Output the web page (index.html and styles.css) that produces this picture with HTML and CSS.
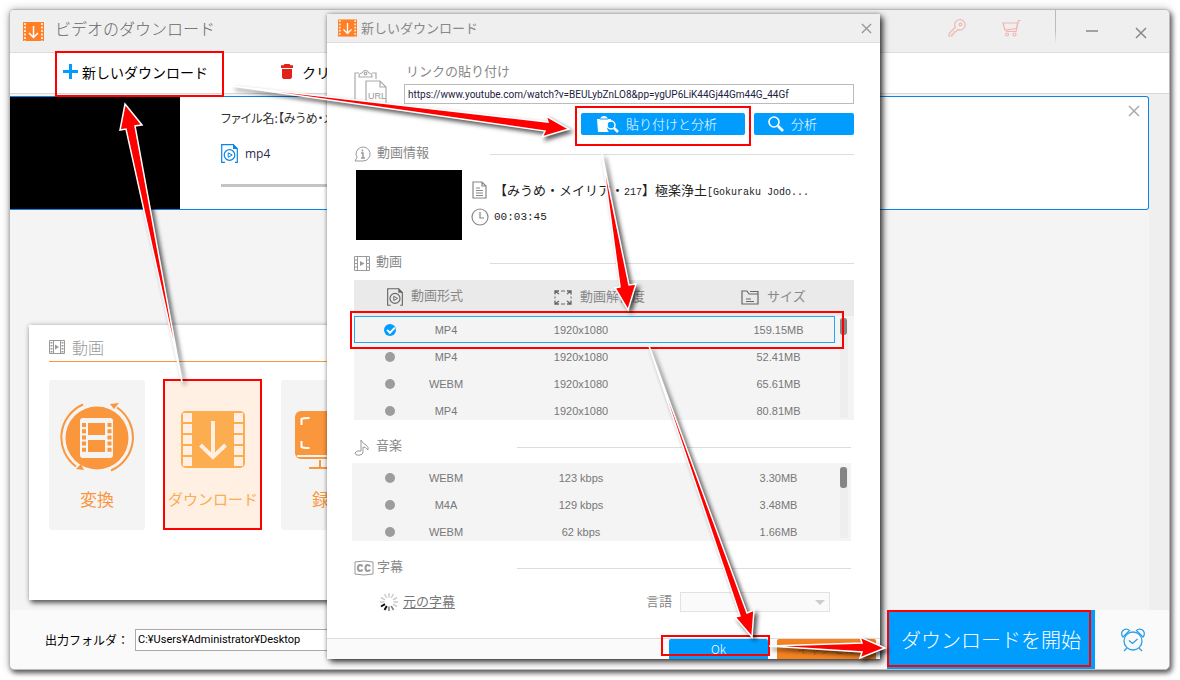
FILE: index.html
```html
<!DOCTYPE html>
<html lang="ja">
<head>
<meta charset="utf-8">
<title>ビデオのダウンロード</title>
<link rel="stylesheet" href="styles.css">
</head>
<body>
<svg class="defs" width="0" height="0" aria-hidden="true">
  <symbol id="logo" viewBox="0 0 21 19">
    <path fill="#ff7f27" d="M0 0h21v19H0z"/>
    <path stroke="#fbe3d0" stroke-width="2" stroke-dasharray="2 1.5" d="M2 1v18M19 1v18"/>
    <path fill="none" stroke="#fff" stroke-width="1.5" d="M10.500 4v11M6 11l4.500 4.500L15 11"/>
  </symbol>
  <symbol id="cross" viewBox="0 0 12 12"><path d="M1 1l10 10M11 1L1 11" fill="none" stroke="currentColor" stroke-width="1.500"/></symbol>
  <symbol id="film" viewBox="0 0 16 14">
    <path fill="none" stroke="currentColor" d="M.5.5h15v13H.5zM4.500.5v13M11.500.5v13"/>
    <path stroke="currentColor" stroke-width="2" stroke-dasharray="1.500 1.500" d="M2.500 2v11M13.500 2v11"/>
    <path fill="currentColor" d="M6 4.500l4 2.500-4 2.500z"/>
  </symbol>
  <symbol id="film-light" viewBox="0 0 16 15">
    <path fill="none" stroke="currentColor" d="M.5.5h15v14H.5zM3.500.5v14M12.500.5v14M.5 4h3M.5 7.500h3M.5 11h3M12.500 4h3M12.500 7.500h3M12.500 11h3"/>
    <path fill="currentColor" d="M6 5l4.500 2.500L6 10z"/>
  </symbol>
  <symbol id="media" viewBox="0 0 17 19">
    <path fill="none" stroke="currentColor" stroke-width="1.200" d="M4 18.300H.7V.7h11.600l4 4v13.600H14"/>
    <path fill="currentColor" d="M12 0l5 5h-5z"/>
    <circle cx="8.500" cy="11" r="5.300" fill="none" stroke="currentColor" stroke-width="1.200"/>
    <path fill="none" stroke="currentColor" d="M7.200 8.800l4 2.200-4 2.200z"/>
  </symbol>
  <symbol id="lens" viewBox="0 0 16 16">
    <circle cx="6" cy="6" r="5" fill="none" stroke="#fff" stroke-width="1.600"/>
    <path d="M10 10l5 5" stroke="#fff" stroke-width="2.600"/>
  </symbol>
</svg>

<main class="window">
  <header class="titlebar">
    <svg class="logo"><use href="#logo"/></svg>
    <h1>ビデオのダウンロード</h1>
    <nav class="title-tools">
      <button class="icon-button pink" aria-label="登録">
        <svg width="18" height="18" viewBox="0 0 18 18" fill="none" stroke="currentColor" stroke-width="1.200"><path d="M7.300 8.300L1 14.500V17h3v-2h2v-2.200h1.700l2-2.200a5.200 5.200 0 1 0-2.400-2.300z"/><circle cx="12.500" cy="5.400" r="1.300"/></svg>
      </button>
      <button class="icon-button pink cart" aria-label="購入">
        <svg width="19" height="18" viewBox="0 0 19 18" fill="none" stroke="currentColor" stroke-width="1.200"><path d="M18.500 1.500h-2L14 12.500H4M1 4h14.500L14.500 9.500 3 11 1 4z"/><circle cx="5" cy="15.500" r="1.500"/><circle cx="12.500" cy="15.500" r="1.500"/></svg>
      </button>
      <span class="divider"></span>
      <button class="icon-button minimize" aria-label="最小化"><svg width="12" height="2"><path d="M0 1h12" stroke="currentColor" stroke-width="1.500"/></svg></button>
      <button class="icon-button close" aria-label="閉じる"><svg width="12" height="12"><use href="#cross"/></svg></button>
    </nav>
  </header>

  <div class="toolbar">
    <button class="tool tool-new"><svg width="15" height="15" viewBox="0 0 15 15"><path d="M7.500 0v15M0 7.500h15" stroke="#009dff" stroke-width="3"/></svg>新しいダウンロード</button>
    <button class="tool"><svg width="12" height="15" viewBox="0 0 12 15" fill="#e2231a"><path d="M3.500 0h5l1 1.200H12V4H0V1.200h2.500zM1 5h10v8.500l-1.500 1.500h-7L1 13.500z"/></svg><span>クリア</span></button>
  </div>

  <div class="content">
    <article class="task">
      <div class="task-thumb"></div>
      <div class="task-info">
        <p class="task-name">ファイル名:【みうめ・メイリア】</p>
        <p class="task-format"><svg width="17" height="19"><use href="#media"/></svg>mp4</p>
        <div class="task-progress"></div>
      </div>
      <button class="icon-button task-close" aria-label="削除"><svg width="12" height="12"><use href="#cross"/></svg></button>
    </article>
    <section class="panel">
      <h2><svg width="16" height="14"><use href="#film"/></svg>動画</h2>
      <div class="cards">
        <button class="card">
          <svg width="74" height="70" viewBox="0 0 74 70">
            <circle cx="37" cy="35" r="31.500" fill="#fa963c"/>
            <path d="M23 1.500a36 36 0 0 0-7 62M51 67.500a36 36 0 0 0 6-63" fill="none" stroke="#fa963c" stroke-width="2"/>
            <path fill="#fa963c" d="M50 1l9-1-5 6zM16 66l8 1-3-6z"/>
            <rect x="20" y="15" width="33" height="40" rx="3" fill="#f4f4f4"/>
            <path fill="#fa963c" d="M28 20h17v12H28zM28 37h17v12H28z"/>
            <path stroke="#fa963c" stroke-width="4" stroke-dasharray="4 2.200" d="M24 20v31M49.500 20v31"/>
          </svg>
          <span class="large">変換</span>
        </button>
        <button class="card active">
          <svg width="74" height="70" viewBox="0 0 74 70">
            <rect x="5" y="8" width="64" height="57" rx="5" fill="#fbad4f"/>
            <path stroke="#fff0e3" stroke-width="9" stroke-dasharray="9 2" d="M11.500 10v53M62.500 10v53"/>
            <path d="M37 18v35M24.500 42L37 54l12.500-12" fill="none" stroke="#fff0e3" stroke-width="4"/>
          </svg>
          <span>ダウンロード</span>
        </button>
        <button class="card">
          <svg width="74" height="70" viewBox="0 0 74 70">
            <rect x="3" y="8" width="68" height="48" rx="6" fill="#fa963c"/>
            <path d="M5 53h64" stroke="#f4f4f4" stroke-width="2"/>
            <path d="M9.500 22v-6q1-1 8-1M9.500 38v6q1 1 8 1" fill="none" stroke="#fff" stroke-width="2"/>
            <path d="M28 57v8M46 57v8M17 65h40" stroke="#fa963c" stroke-width="2"/>
          </svg>
          <span class="large">録画</span>
        </button>
      </div>
    </section>
  </div>

  <footer class="bottom">
    <label for="folder">出力フォルダ：</label>
    <input id="folder" class="folder" value="C:¥Users¥Administrator¥Desktop">
    <button class="start">ダウンロードを開始</button>
    <button class="icon-button alarm" aria-label="アラーム">
      <svg width="26" height="24" viewBox="0 0 26 24" fill="none" stroke="currentColor" stroke-width="1.300"><circle cx="13" cy="13" r="9"/><path d="M3 9a4.500 4.500 0 1 1 6.500-6.500zM23 9a4.500 4.500 0 1 0-6.500-6.500zM9 12.500l3.500 3 5-4.500M7 20l-3 3M19 20l3 3"/></svg>
    </button>
  </footer>
</main>

<section class="dialog" role="dialog" aria-label="新しいダウンロード">
  <header class="dialog-title">
    <svg class="logo"><use href="#logo"/></svg>
    <h2>新しいダウンロード</h2>
    <button class="icon-button" aria-label="閉じる"><svg width="11" height="11"><use href="#cross"/></svg></button>
  </header>

  <div class="dialog-body">
    <div class="link">
      <svg class="url-icon" width="34" height="36" viewBox="0 0 34 36" fill="none" stroke="#aaa" stroke-width="1.200">
        <path d="M11 34H1V4h4M18 4h4v6"/><path d="M5 8q0-4 3-4 3.500-5.500 7 0 3 0 3 4z"/><circle cx="11.500" cy="4.500" r="1.300"/><path d="M12 35V12h14l6 6v17M26 12v6h6" fill="#fff"/>
        <text x="14" y="30" class="url-text">URL</text>
      </svg>
      <div class="link-form">
        <label for="url">リンクの貼り付け</label>
        <input id="url" value="https://www.youtube.com/watch?v=BEULybZnLO8&amp;pp=ygUP6LiK44Gj44Gm44G_44Gf">
        <div class="link-buttons">
          <button class="blue paste"><svg width="22" height="17" viewBox="0 0 22 17"><path fill="#fff" d="M0 3h3q1-3 4-3t4 3h3v3a6 6 0 0 0-2 10H1z"/><path d="M3 3h8" stroke="#009dff"/><circle cx="14" cy="9" r="4" fill="#009dff" stroke="#fff" stroke-width="1.500"/><path d="M17 12l4 4" stroke="#fff" stroke-width="2.500"/></svg>貼り付けと分析</button>
          <button class="blue analyze"><svg width="16" height="16"><use href="#lens"/></svg>分析</button>
        </div>
      </div>
    </div>

    <h3 class="info-heading"><svg width="17" height="16" viewBox="0 0 17 16" fill="none" stroke="currentColor"><path d="M1 15h8a7 7 0 1 0-6-3.500z"/><path d="M7 7h2v5M7 12h4M8.500 3.500v2" stroke-width="1.500"/></svg><span>動画情報</span><i></i></h3>
    <div class="info">
      <div class="info-thumb"></div>
      <div class="info-lines">
        <p><svg width="18" height="18" viewBox="0 0 18 18" fill="none" stroke="#888" stroke-width="1.200"><path d="M2 1h9l4 4v12H2zM11 1v4h4M5 7h4M5 9.500h7M5 12h7M5 14.500h7"/></svg><span class="info-name">【みうめ・メイリア・<b>217</b>】極楽浄土<b>[Gokuraku Jodo...</b></span></p>
        <p><svg width="18" height="18" viewBox="0 0 18 18" fill="none" stroke="#888" stroke-width="1.200"><circle cx="9" cy="9" r="8"/><path d="M9 4v6h4"/></svg><b>00:03:45</b></p>
      </div>
    </div>

    <h3 class="video-heading"><svg width="16" height="15"><use href="#film-light"/></svg><span>動画</span><i></i></h3>
    <div class="list">
      <table>
        <colgroup><col class="c-pick"><col class="c-format"><col class="c-quality"><col></colgroup>
        <thead><tr>
          <th colspan="2" class="h-format"><svg width="16" height="18"><use href="#media"/></svg>動画形式</th>
          <th class="h-quality"><svg width="18" height="15" viewBox="0 0 18 15" fill="none" stroke="currentColor"><path d="M1 4.500V1h4M13 1h4v3.500M17 10.500V14h-4M5 14H1v-3.500M1 1l4 3M17 1l-4 3M1 14l4-3M17 14l-4-3" stroke-width="1.300"/><path d="M7 1h4M7 14h4M1 6.500v2M17 6.500v2"/></svg>動画解像度</th>
          <th class="h-size"><svg width="18" height="15" viewBox="0 0 18 15" fill="none" stroke="currentColor" stroke-width="1.200"><path d="M1 14V1h5l2 3h9v10zM9 1.500h8V4M5 9h5M5 11.500h8"/></svg>サイズ</th>
        </tr></thead>
        <tbody>
          <tr class="selected"><td><input type="radio" name="video" aria-label="MP4 159.15MB" checked></td><td>MP4</td><td>1920x1080</td><td>159.15MB</td></tr>
          <tr><td><input type="radio" name="video" aria-label="MP4 52.41MB"></td><td>MP4</td><td>1920x1080</td><td>52.41MB</td></tr>
          <tr><td><input type="radio" name="video" aria-label="WEBM 65.61MB"></td><td>WEBM</td><td>1920x1080</td><td>65.61MB</td></tr>
          <tr><td><input type="radio" name="video" aria-label="MP4 80.81MB"></td><td>MP4</td><td>1920x1080</td><td>80.81MB</td></tr>
        </tbody>
      </table>
      <div class="scroll video-scroll"><span></span></div>
    </div>

    <h3 class="wide music-heading"><svg width="16" height="17" viewBox="0 0 16 17" fill="none" stroke="currentColor"><path d="M7 12V1q1 3 5 5 3 2 2 5-2-3-5-3v5q0 3-4 3.300-4 0-4-2.300 1-3 6-2z"/></svg><span>音楽</span><i></i></h3>
    <div class="list music">
      <table>
        <colgroup><col class="c-pick"><col class="c-format"><col class="c-quality"><col></colgroup>
        <tbody>
          <tr><td><input type="radio" name="audio" aria-label="WEBM 123 kbps"></td><td>WEBM</td><td>123 kbps</td><td>3.30MB</td></tr>
          <tr><td><input type="radio" name="audio" aria-label="M4A 129 kbps"></td><td>M4A</td><td>129 kbps</td><td>3.48MB</td></tr>
          <tr><td><input type="radio" name="audio" aria-label="WEBM 62 kbps"></td><td>WEBM</td><td>62 kbps</td><td>1.66MB</td></tr>
        </tbody>
      </table>
      <div class="scroll music-scroll"><span></span></div>
    </div>

    <h3 class="wide caption-heading"><svg width="20" height="16" viewBox="0 0 20 16" fill="none" stroke="currentColor"><path d="M1 2q9-2 18 0v12q-9 2-18 0z"/><path d="M8.500 6.500Q8 5 6 5 4 5 4 8t2 3q2 0 2.500-1.500M16 6.500Q15.500 5 13.500 5q-2 0-2 3t2 3q2 0 2.500-1.500" stroke-width="2"/></svg><span>字幕</span><i></i></h3>
    <div class="captions">
      <svg width="18" height="18" viewBox="-9 -9 18 18" stroke-width="1.500">
        <path stroke="#ccc" d="M0-4.500V-9M2.200-4l2.300-4M4-2.200L8-4.500M4.500 0H9M4 2.200L8 4.500M2.200 4l2.300 4M-2.200-4l-2.300-4M-4-2.200L-8-4.500M-4.500 0H-9"/>
        <path stroke="#777" d="M2.200 4l2.300 4M0 4.500V9"/><path stroke="#111" stroke-width="2" d="M-2.200 4l-2.300 4M-4 2.200L-8 4.500"/>
      </svg>
      <a href="#">元の字幕</a>
      <label for="lang">言語</label>
      <span class="select-wrap"><select id="lang"><option></option></select></span>
    </div>
  </div>

  <footer class="dialog-footer">
    <button class="ok">Ok</button>
    <button class="cancel">キャンセル</button>
  </footer>
</section>

<svg class="notes" width="1180" height="680" viewBox="0 0 1180 680" aria-hidden="true">
  <g fill="none" stroke="#f00" stroke-width="2">
    <path d="M56 52h167v44H56zM164 380h97v149h-97zM351 312h492v36H351zM662 636h107v19H662zM888 611h202v55H888zM576 107h174v38H576z"/>
  </g>
  <g class="arrows">
    <path d="M232 86L548 122 546 116 569 129 542 137 545 131z"/>
    <path d="M182 382L126 129 120 130 125 104 142 125 135 126z"/>
    <path d="M602 154L620 287 615 288 628 310 636 284 629 285z"/>
    <path d="M649 346L740 616 735 617 752 637 754 610 747 613z"/>
    <path d="M769 646L862 643 860 637 885 648 860 658 862 652z"/>
  </g>
</svg>
</body>
</html>
```
FILE: styles.css
```css
* { box-sizing: border-box; }
body {
  margin: 0;
  padding: 9px 10px 10px 9px;
  height: 100vh;
  overflow: hidden;
  background: #fff;
  color: #000;
  font: 400 12px/16px "Noto Sans CJK JP", sans-serif;
}
h1, h2, h3, p { margin: 0; font-weight: inherit; }
button, input, select { font: inherit; color: inherit; padding: 0; border: 0; }
button { background: none; white-space: nowrap; }
svg { flex: none; display: block; }
.defs, .notes { position: absolute; }
.icon-button { display: flex; }

.window {
  height: 100%;
  display: flex;
  flex-direction: column;
  border: 1px solid #bbb;
  border-radius: 5px;
  background: #fafafa;
  box-shadow: 2px 3px 5px rgba(0, 0, 0, .6), 0 0 8px rgba(0, 0, 0, .25);
  overflow: hidden;
}
.titlebar {
  display: flex;
  align-items: center;
  height: 43px;
  flex: none;
  padding-left: 13px;
  background: #efefef;
  border-bottom: 1px solid #ddd;
  color: #666;
}
.logo { width: 21px; height: 19px; }
.titlebar h1 { margin-left: 11px; font-size: 16px; font-weight: 300; line-height: 24px; padding-bottom: 7px; }
.title-tools { display: flex; align-items: center; margin-left: auto; height: 100%; padding-right: 22px; color: #888; }
.pink { color: #f2b6b1; padding-bottom: 6px; }
.cart { margin-left: 36px; }
.divider { width: 1px; height: 34px; align-self: flex-start; margin: 0 30px 0 34px; background: linear-gradient(#bbb 60%, #efefef); }
.close { margin: 4px 0 0 37px; }

.toolbar {
  display: flex;
  gap: 73px;
  height: 41px;
  flex: none;
  padding: 0 0 3px 53px;
  background: #fff;
  border-bottom: 1px solid #d8d8d8;
}
.tool { display: flex; align-items: center; gap: 4px; font-size: 14px; }
.tool span { margin-left: 5px; }

.content {
  flex: 1;
  min-height: 0;
  padding: 2px 20px 0 0;
  background: linear-gradient(#efefef, #efefef) right / 20px 100% no-repeat #f4f4f4;
}
.task { display: flex; height: 114px; background: #fff; border: 1px solid #0a84e8; border-left: 0; border-radius: 0 3px 3px 0; }
.task-thumb { width: 170px; background: #000; }
.task-info { margin-left: 41px; width: 400px; color: #333; }
.task-name { padding-top: 13px; font-feature-settings: "palt"; }
.task-format { display: flex; align-items: center; gap: 7px; margin-top: 18px; color: #2b2b4d; font: 12px/19px "Open Sans", sans-serif; }
.task-format svg { color: #0a84e8; }
.task-progress { height: 3px; margin-top: 21px; background: #c4c4c4; }
.task-close { margin: 8px 8px auto auto; color: #aaa; }

.panel { width: 720px; height: 275px; margin: 115px 0 0 19px; padding: 13px 20px; background: #fff; box-shadow: 2px 3px 5px rgba(0, 0, 0, .6), 0 0 5px rgba(0, 0, 0, .2); }
.panel h2 { display: flex; align-items: center; gap: 7px; height: 24px; padding-bottom: 6px; font-size: 16px; font-weight: 300; color: #999; border-bottom: 1px solid #fa963c; }
.cards { display: flex; gap: 20px; margin-top: 18px; }
.card { display: flex; flex-direction: column; align-items: center; width: 96px; height: 150px; padding-top: 23px; border-radius: 3px; background: #f4f4f4; color: #fa963c; font-size: 15px; }
.card span { margin-top: 16px; line-height: 20px; }
.card .large { font-size: 17px; }
.active { background: #fff0e3; color: #fbad4f; }

.bottom { display: flex; align-items: center; height: 59px; flex: none; padding-left: 35px; }
.folder { width: 240px; height: 22px; margin-left: 6px; padding-left: 2px; border: 1px solid #aaa; background: #fff; font: 11px/16px Roboto, sans-serif; }
.start { width: 208px; height: 100%; margin-left: auto; background: #009dff; color: #fff; font-size: 20px; font-weight: 300; }
.alarm { margin: 0 23px 0 25px; color: #2b9fe8; }

.dialog {
  position: absolute;
  left: 327px;
  top: 14px;
  width: 553px;
  height: 645px;
  display: flex;
  flex-direction: column;
  background: #fff;
  color: #888;
  font-size: 13px;
  box-shadow: 3px 3px 6px rgba(0, 0, 0, .75), 0 0 4px rgba(0, 0, 0, .3);
  overflow: hidden;
}
.dialog-title { display: flex; align-items: center; gap: 4px; height: 29px; flex: none; padding: 0 8px 0 11px; background: #efefef; border-bottom: 1px solid #ddd; }
.dialog-title .icon-button { margin-left: auto; color: #999; }
.dialog-title h2 { font-size: 13px; }
.dialog-title .logo { height: 18px; width: 19px; }
.dialog-body { flex: 1; min-height: 0; padding: 20px 26px 0 27px; }

.link { display: flex; gap: 16px; }
.url-icon { margin-top: 6px; }
.url-text { font: 9px "Liberation Sans", sans-serif; fill: #999; stroke: none; }
.link-form { flex: 1; }
.link-form label { display: block; margin-left: 2px; }
.link-form input { display: block; width: 100%; height: 20px; margin-top: 5px; padding-left: 3px; border: 1px solid #bbb; background: #fff; color: #222240; font: 10px/16px Roboto, sans-serif; }
.link-buttons { display: flex; justify-content: flex-end; gap: 9px; margin-top: 9px; }
.blue { display: flex; align-items: center; height: 22px; gap: 7px; border-radius: 2px; background: #009dff; color: #fff; font-weight: 300; }
.paste { width: 164px; padding-left: 16px; }
.analyze { width: 100px; padding-left: 14px; }

h3 { display: flex; align-items: center; height: 18px; color: #888; font-size: 13px; }
h3 svg { color: #999; margin-right: 6px; }
h3 span { padding-bottom: 4px; }
h3 i { flex: none; width: 364px; height: 1px; margin-left: auto; background: #ddd; }
.wide { margin-right: 3px; }
.wide i { width: 334px; }
.info-heading { margin-top: 10px; }
.info { display: flex; gap: 9px; margin: 7px 0 0 2px; }
.info-thumb { width: 106px; height: 70px; background: #000; }
.info-lines { padding-top: 11px; color: #222; }
.info-lines p { display: flex; align-items: center; gap: 5px; height: 18px; margin-bottom: 9px; }
.info-lines b { font: 11px "Liberation Mono", monospace; }
.info-lines .info-name b { font-size: 10px; }
.video-heading { margin-top: 14px; }

.list { position: relative; height: 140px; margin-top: 8px; background: #f4f4f4; overflow: hidden; }
table { width: 481px; table-layout: fixed; border-collapse: collapse; }
.c-pick { width: 72px; }
.c-format { width: 40px; }
.c-quality { width: 230px; }
th { height: 36px; padding: 0 0 3px; background: #eaeaea; font-weight: inherit; text-align: left; white-space: nowrap; }
th svg { display: inline-block; vertical-align: middle; margin-right: 8px; color: #666; }
.h-format { padding-left: 33px; }
.h-quality { padding-left: 88px; }
.h-size { padding-left: 45px; box-shadow: 19px 0 0 #eaeaea; }
td { height: 27px; padding: 0; text-align: center; color: #777; font: 11px/16px "Liberation Sans", sans-serif; }
td:last-child { padding-left: 26px; }
.selected { outline: 1px solid #27a6f5; outline-offset: -1px; }
td input { appearance: none; display: block; width: 10px; height: 10px; margin: 1px auto 0; border-radius: 50%; background: #9d9d9d; }
td input:checked { width: 12px; height: 12px; background: #009dff; }
td input:checked::after { content: ""; display: block; width: 6px; height: 3px; margin: 3px; border: solid #fff; border-width: 0 0 2px 2px; transform: rotate(-45deg); }
.scroll { position: absolute; left: 486px; width: 8px; background: #eee; }
.scroll span { display: block; width: 7px; border-radius: 3px; background: #858585; }
.video-scroll { top: 38px; bottom: 2px; }
.video-scroll span { height: 17px; }
.music-heading { margin-top: 18px; }
.music { margin: 7px 3px 0 -2px; padding: 1px 0 0 2px; height: 78px; }
.music-scroll { left: 488px; top: 4px; bottom: 3px; }
.music-scroll span { height: 21px; }
.caption-heading { margin-top: 18px; }
.caption-heading svg { margin-right: 3px; }
.captions { display: flex; align-items: center; height: 22px; margin: 14px 24px 0 26px; }
.captions a { margin-left: 5px; padding-bottom: 3px; color: #777; text-underline-offset: 2px; }
.captions label { margin: 0 8px 0 auto; padding-bottom: 3px; }
.select-wrap { position: relative; display: block; }
.select-wrap::after { content: ""; position: absolute; right: 5px; top: 8px; border: 5px solid transparent; border-top-color: #ccc; border-bottom: 0; }
select { appearance: none; display: block; width: 150px; height: 20px; border: 1px solid #e2e2e2; background: #fafafa; }

.dialog-footer { display: flex; justify-content: flex-end; gap: 9px; height: 21px; flex: none; padding-right: 4px; border-top: 1px solid #ddd; background: #fafafa; }
.dialog-footer button { width: 99px; height: 20px; border-radius: 2px 2px 0 0; color: #fff; font-size: 12px; font-weight: 300; }
.ok { background: #009dff; }
.dialog-footer .cancel { background: #f58220; color: #a65a1c; }

.notes { left: 0; top: 0; pointer-events: none; }
.arrows { fill: #f00; stroke: #fff; stroke-width: 1.5px; filter: drop-shadow(3px 3px 2px rgba(0, 0, 0, .65)); }
```
